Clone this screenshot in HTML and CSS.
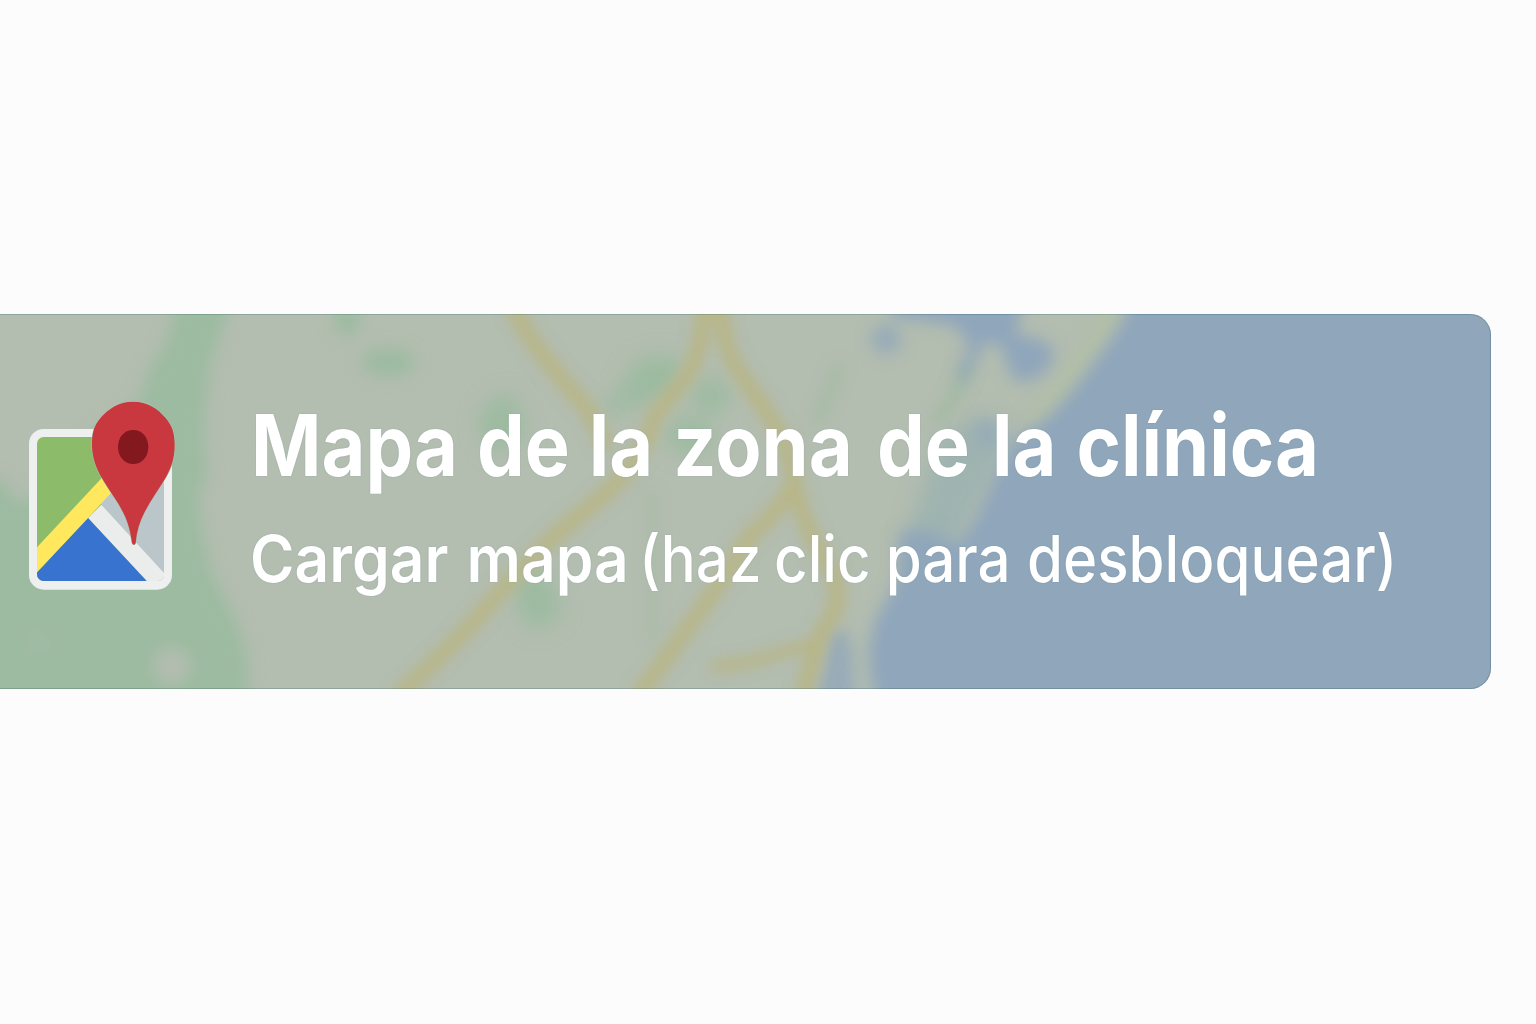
FILE: index.html
```
<!DOCTYPE html>
<html lang="es">
<head>
<meta charset="utf-8">
<title>Mapa de la zona de la clínica</title>
<link rel="stylesheet" href="styles.css">
</head>
<body>
<main class="page">
  <section class="banner">
    <svg class="map" viewBox="0 314 1491 375" preserveAspectRatio="none" aria-hidden="true">
      <defs>
        <filter id="soft" filterUnits="userSpaceOnUse" x="-60" y="254" width="1620" height="500"><feGaussianBlur stdDeviation="8"/></filter>
        <filter id="softer" filterUnits="userSpaceOnUse" x="-60" y="254" width="1620" height="500"><feGaussianBlur stdDeviation="10"/></filter>
        <filter id="road" filterUnits="userSpaceOnUse" x="-60" y="254" width="1620" height="500"><feGaussianBlur stdDeviation="6.5"/></filter>
      </defs>
      <rect class="land" x="0" y="314" width="1491" height="375"/>
      <g class="park" filter="url(#soft)">
        <path d="M182 280 L236 280 Q222 330 210 365 L204 420 Q203 455 208 470 L198 500 Q202 540 214 580 Q236 615 246 650 L252 740 L-50 740 L-50 480 L5 480 Q15 510 28 500 L100 430 L142 398 Q144 370 166 345 Z"/>
        <ellipse cx="347" cy="320" rx="13" ry="16"/>
        <ellipse cx="388" cy="362" rx="27" ry="14"/>
      </g>
      <ellipse class="land" cx="172" cy="666" rx="19" ry="19" filter="url(#soft)"/>
      <ellipse class="land" cx="38" cy="642" rx="14" ry="14" opacity=".25" filter="url(#soft)"/>
      <g class="park" filter="url(#softer)">
        <path d="M478 422 Q488 393 514 394 L527 440 L490 452 Z"/>
        <path d="M598 408 Q626 390 630 368 Q650 348 680 360 Q686 380 668 394 Q640 408 602 414Z"/>
        <ellipse cx="711" cy="396" rx="18" ry="18"/>
        <ellipse cx="690" cy="436" rx="24" ry="18"/>
        <path d="M514 570 L547 572 L562 612 Q542 637 522 622Z"/>
      </g>
      <g class="trail" filter="url(#road)">
        <path d="M840 365 L816 425" opacity=".75"/>
        <path d="M652 490 L652 640" opacity=".4"/>
        <path d="M968 362 Q960 395 936 420"/>
      </g>
      <path class="sound" filter="url(#softer)" d="M938 440 L985 412 L1010 440 L955 545 L905 545 Z"/>
      <path class="coast" filter="url(#road)" d="M1118 300 Q1075 385 1030 424"/>
      <g class="water" filter="url(#soft)">
        <path d="M1140 280 L1124 318 Q1112 340 1094 362 Q1066 402 1042 422 L1016 438 L1000 465 Q986 495 976 518 L958 544 Q915 518 898 538 Q904 580 880 610 Q866 640 870 670 L880 730 L1600 730 L1600 280 Z"/>
        <path d="M890 280 L1036 280 L1016 325 L1020 336 Q1058 338 1053 362 Q1034 388 1012 378 Q1006 362 1002 346 L985 342 L964 384 L956 380 L970 345 L955 326 Q930 320 894 318 Z"/>
        <circle cx="886" cy="339" r="15" opacity=".75"/>
        <circle cx="988" cy="434" r="14" opacity=".6"/>
        <path d="M828 632 Q845 624 852 645 L857 730 L806 730 L823 672 Z" opacity=".75"/>
      </g>
      <g class="roads" filter="url(#road)">
        <path d="M512 306 Q530 340 548 362 L588 410 Q602 432 605 450"/>
        <path d="M704 300 Q703 350 688 374 L655 415 Q645 455 610 490 L550 540 L500 592 Q460 640 398 696"/>
        <path d="M720 300 Q724 350 738 370 L772 420 Q792 455 794 480 Q804 530 830 568 Q848 598 822 632 L802 696"/>
        <path d="M796 480 Q785 505 750 536 L722 580 Q680 640 638 696"/>
        <path d="M712 667 Q750 664 776 654 L812 644" class="minor"/>
      </g>
    </svg>

    <div class="content">
      <svg class="icon" viewBox="84 60 444 573" role="img" aria-label="Mapas">
        <defs><clipPath id="sheet"><rect x="111" y="171" width="382" height="432" rx="20"/></clipPath></defs>
        <rect x="87" y="147" width="429" height="482" rx="44" fill="#eeefef"/>
        <g clip-path="url(#sheet)">
          <rect x="111" y="171" width="381" height="432" fill="#8cbc69"/>
          <path d="M290 350 L400 200 L492 200 L492 603 L440 603 Z" fill="#bac6c9"/>
          <path d="M264 414 L304 374 L492 579 L492 603 L440 603 Z" fill="#ebeded"/>
          <path d="M264 414 L440 603 L111 603 L111 577 Z" fill="#3873d0"/>
          <path d="M111 502 L320 278 L352 318 L264 414 L111 577 Z" fill="#ffe75e"/>
        </g>
        <path d="M399 65 C354 65 326 87 302 113 C280 138 276 163 276 196 C276 232 288 265 306 295 C328 333 352 362 369 397 C386 431 391 456 396 488 Q397 494 402 494 Q406 494 407 488 C410 455 419 425 434 396 C452 360 478 325 497 293 C514 265 524 234 524 196 C524 163 519 140 497 114 C473 86 444 65 399 65 Z" fill="#ca383f" stroke="#a3cdb2" stroke-width="3" paint-order="stroke"/>
        <path d="M400 150 C426 150 445 172 445 201 C445 230 426 252 400 252 C373 252 354 230 354 201 C354 172 373 150 400 150Z" fill="#83191e"/>
      </svg>

      <div class="copy">
        <h1 class="title">
          <span>Mapa</span> <span class="w1">de</span> <span class="w1">la</span> <span class="w2">zona</span> <span class="w4">de</span> <span class="w3">la</span> <span class="w2">clínica</span>
        </h1>
        <p class="subtitle">
          <strong class="action"><span>Cargar</span> <span class="s1">mapa</span></strong>
          <span class="hint"><span>(haz</span> <span class="s2">clic</span> <span class="s3">para</span> <span class="s4">desbloquear)</span></span>
        </p>
      </div>
    </div>
  </section>
</main>
</body>
</html>
```
FILE: styles.css
```
* { box-sizing: border-box; }

body {
  margin: 0;
  background: #fcfcfc;
  font-family: Inter, "Liberation Sans", sans-serif;
}

.page {
  height: 1024px;
  padding-top: 314px;
  overflow: hidden;
}

.banner {
  position: relative;
  display: grid;
  width: 1491px;
  height: 375px;
  border-radius: 0 21px 21px 0;
  overflow: hidden;
  background: #b3bdb0;
}

/* hairline edge that darkens whatever part of the map it crosses */
.banner::after {
  content: "";
  position: absolute;
  inset: 0;
  border: 1px solid #ccdde0;
  border-left: 0;
  border-radius: 0 21px 21px 0;
  mix-blend-mode: multiply;
}

/* map artwork and content share the single grid cell */
.map,
.content { grid-area: 1 / 1; }

.map {
  display: block;
  width: 1491px;
  height: 375px;
}

.land { fill: #b3bdb0; }
.park { fill: #9cbba0; }
.water { fill: #8fa6bb; }
.sound { fill: #9fb4b0; }
.trail { fill: none; stroke: #a3bba3; stroke-width: 12; }
.coast { fill: none; stroke: #b2bfa8; stroke-width: 22; }
.roads { fill: none; stroke: #b8b687; stroke-width: 16; stroke-linejoin: round; }
.roads .minor { stroke-width: 11; }

.content {
  position: relative;
  display: flex;
  align-items: flex-start;
}

.icon {
  flex: none;
  width: 148px;
  height: 191px;
  margin: 86px 75px 0 28px;
}

.copy {
  padding-top: 79px;
  color: #fff;
  text-shadow: 0 0 1px rgba(70, 115, 120, .55);
}

.title,
.subtitle,
.action,
.hint {
  display: flex;
  margin: 0;
  white-space: nowrap;
}

.title {
  font-size: 85.5px;
  font-weight: 680;
  line-height: 104px;
  transform: scaleX(.8858);
  transform-origin: 0 0;
}

.w1 { margin-left: 21.4px; }
.w2 { margin-left: 22.6px; }
.w3 { margin-left: 25px; }
.w4 { margin-left: 27.4px; }

.subtitle {
  margin-top: 22px;
  font-size: 65px;
  line-height: 79px;
}

.action {
  width: 388px;
  font-weight: 620;
  transform: translateX(-1px) scaleX(.93);
  transform-origin: 0 0;
}

.hint {
  font-weight: 540;
  transform: scaleX(.896);
  transform-origin: 0 0;
}

.s1 { margin-left: 19.5px; }
.s2 { margin-left: 14px; }
.s3 { margin-left: 16.8px; }
.s4 { margin-left: 18.2px; }
```
